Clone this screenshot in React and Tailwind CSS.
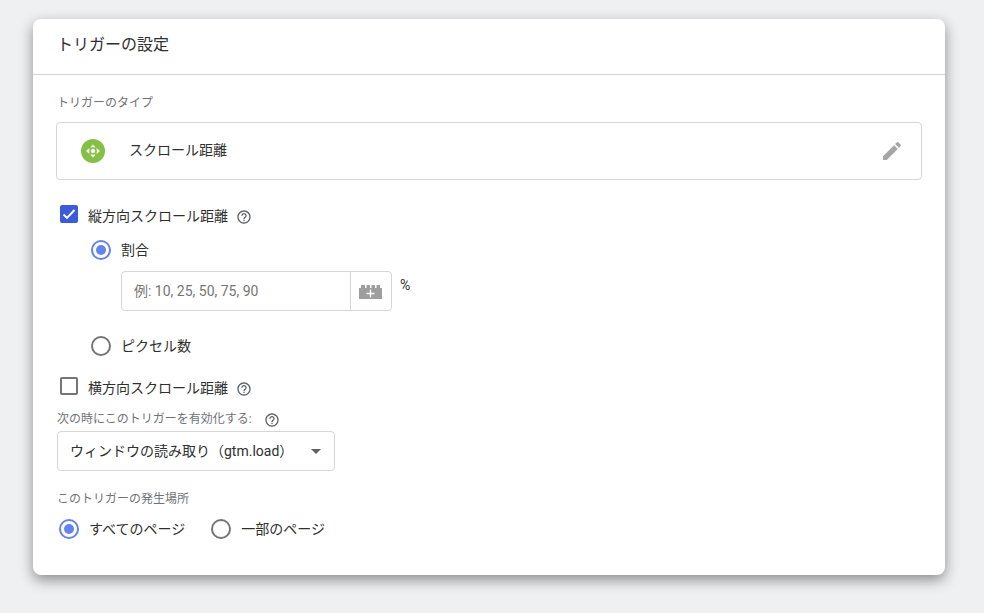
import React, { useState } from 'react';
import { MdEdit, MdHelpOutline } from 'react-icons/md';

const ScrollIcon = () => (
  <svg width="24" height="24" viewBox="0 0 24 24" className="shrink-0">
    <circle cx="12" cy="12" r="12" fill="#86bf46" />
    <g fill="#fff" stroke="#fff" strokeWidth="0.5" strokeLinejoin="round">
      <circle cx="12" cy="12" r="1.9" />
      <path d="M12 5.8L14.2 8.3L12 7.9L9.8 8.3Z" />
      <path d="M12 18.2L14.2 15.7L12 16.1L9.8 15.7Z" />
      <path d="M5.4 12L8.2 9.6L7.9 12L8.2 14.4Z" />
      <path d="M18.6 12L15.8 9.6L16.1 12L15.8 14.4Z" />
    </g>
  </svg>
);

const BrickIcon = () => (
  <svg width="23" height="14" viewBox="0 0 23 14">
    <path
      d="M0 3H2V0H6V3H7.5V0H11V3H12.5V0H16V3H17.5V0H21V3H23V14H0Z"
      fill="#9e9e9e"
    />
    <path d="M11.5 4.5V12.5M7.5 8.5H15.5" stroke="#fff" strokeWidth="1.3" />
  </svg>
);

const Help = () => (
  <button type="button" aria-label="ヘルプ" className="mt-0.5 text-[#5f6368]">
    <MdHelpOutline size={16} />
  </button>
);

const Checkbox = ({ id, label, checked, onChange }) => (
  <div className="flex h-6 items-center pl-1">
    <span className="mt-px grid shrink-0 self-start">
      <input
        id={id}
        type="checkbox"
        checked={checked}
        onChange={onChange}
        className="col-start-1 row-start-1 size-[18px] appearance-none rounded-[2px] border-2 border-[#757575] checked:border-[#3b5bdb] checked:bg-[#3b5bdb]"
      />
      {checked && (
        <svg viewBox="0 0 18 18" className="pointer-events-none col-start-1 row-start-1 size-[18px]">
          <path d="M3.5 9.5L7 13L14.5 5" fill="none" stroke="#fff" strokeWidth="1.9" />
        </svg>
      )}
    </span>
    <label htmlFor={id} className="mr-2 pl-2.5">{label}</label>
    <Help />
  </div>
);

const Radio = ({ label, name, checked, onChange }) => (
  <label className="flex h-6 items-center gap-2.5">
    <span className="grid shrink-0 place-items-center">
      <input
        type="radio"
        name={name}
        checked={checked}
        onChange={onChange}
        className="col-start-1 row-start-1 size-5 appearance-none rounded-full border-2 border-[#757575] checked:border-[#6384ec]"
      />
      {checked && (
        <span className="pointer-events-none col-start-1 row-start-1 size-2.5 rounded-full bg-[#6384ec]" />
      )}
    </span>
    {label}
  </label>
);

const App = () => {
  const [vertical, setVertical] = useState(true);
  const [horizontal, setHorizontal] = useState(false);
  const [unit, setUnit] = useState('percent');
  const [pages, setPages] = useState('all');

  return (
    <div className="min-h-screen bg-[#eff0f2] pt-[19px] pr-[39px] pb-[38px] pl-[33px] font-['Roboto','Noto_Sans_CJK_JP',sans-serif] text-sm text-[#2f2f2f]">
      <main className="rounded-lg bg-white shadow-[0_5px_14px_rgba(0,0,0,0.42)]">
        {/* Header */}
        <header className="flex h-14 items-center border-b border-[#d3d5d7] px-6">
          <h1 className="pb-1 text-base">トリガーの設定</h1>
        </header>

        <div className="px-[23px] pt-4 pb-[34px]">
          {/* Trigger type */}
          <h2 className="pl-px text-xs leading-6 text-[#6f7276]">トリガーのタイプ</h2>
          <button
            type="button"
            className="mt-[7px] flex h-[58px] w-full items-center rounded border border-[#d6d6d6] pr-[17px] pl-6 text-left"
          >
            <ScrollIcon />
            <span className="flex-1 pb-0.5 pl-6">スクロール距離</span>
            <MdEdit size={24} className="text-[#a6a6a6]" />
          </button>

          {/* Vertical scroll depth */}
          <section className="mt-6">
            <Checkbox
              id="vertical"
              label="縦方向スクロール距離"
              checked={vertical}
              onChange={() => setVertical(!vertical)}
            />
            <div className="mt-2.5 pl-[35px]">
              <Radio
                label="割合"
                name="unit"
                checked={unit === 'percent'}
                onChange={() => setUnit('percent')}
              />
              <div className="mt-[9px] flex gap-2 pl-[30px]">
                <div className="flex h-10 w-[271px] rounded border border-[#d6d6d6]">
                  <input
                    type="text"
                    aria-label="割合"
                    placeholder="例: 10, 25, 50, 75, 90"
                    className="min-w-0 flex-1 px-3 outline-none placeholder:text-[#757575]"
                  />
                  <button
                    type="button"
                    aria-label="変数を追加"
                    className="flex w-[41px] items-center border-l border-[#d6d6d6] pt-0.5 pl-2"
                  >
                    <BrickIcon />
                  </button>
                </div>
                <span className="pt-1">%</span>
              </div>
              <div className="mt-[23px]">
                <Radio
                  label="ピクセル数"
                  name="unit"
                  checked={unit === 'pixels'}
                  onChange={() => setUnit('pixels')}
                />
              </div>
            </div>
          </section>

          {/* Horizontal scroll depth */}
          <section className="mt-[18px]">
            <Checkbox
              id="horizontal"
              label="横方向スクロール距離"
              checked={horizontal}
              onChange={() => setHorizontal(!horizontal)}
            />
          </section>

          {/* Enable on */}
          <div className="mt-[7px] flex items-center gap-3 pl-px">
            <label htmlFor="enable" className="text-xs leading-6 text-[#6f7276]">
              次の時にこのトリガーを有効化する:
            </label>
            <Help />
          </div>
          <div className="ml-px grid w-[278px] items-center">
            <select
              id="enable"
              className="col-start-1 row-start-1 h-10 w-full appearance-none rounded border border-[#d6d6d6] bg-white pr-8 pl-3"
            >
              <option>ウィンドウの読み取り（gtm.load）</option>
            </select>
            <svg
              width="10"
              height="5"
              viewBox="0 0 10 5"
              className="pointer-events-none col-start-1 row-start-1 mr-3.5 justify-self-end"
            >
              <path d="M0 0H10L5 5Z" fill="#616161" />
            </svg>
          </div>

          {/* Where it fires */}
          <fieldset className="mt-4">
            <legend className="pl-px text-xs leading-6 text-[#6f7276]">
              このトリガーの発生場所
            </legend>
            <div className="mt-1.5 flex gap-[26px] pl-[3px]">
              <Radio
                label="すべてのページ"
                name="pages"
                checked={pages === 'all'}
                onChange={() => setPages('all')}
              />
              <Radio
                label="一部のページ"
                name="pages"
                checked={pages === 'some'}
                onChange={() => setPages('some')}
              />
            </div>
          </fieldset>
        </div>
      </main>
    </div>
  );
};

export default App;
